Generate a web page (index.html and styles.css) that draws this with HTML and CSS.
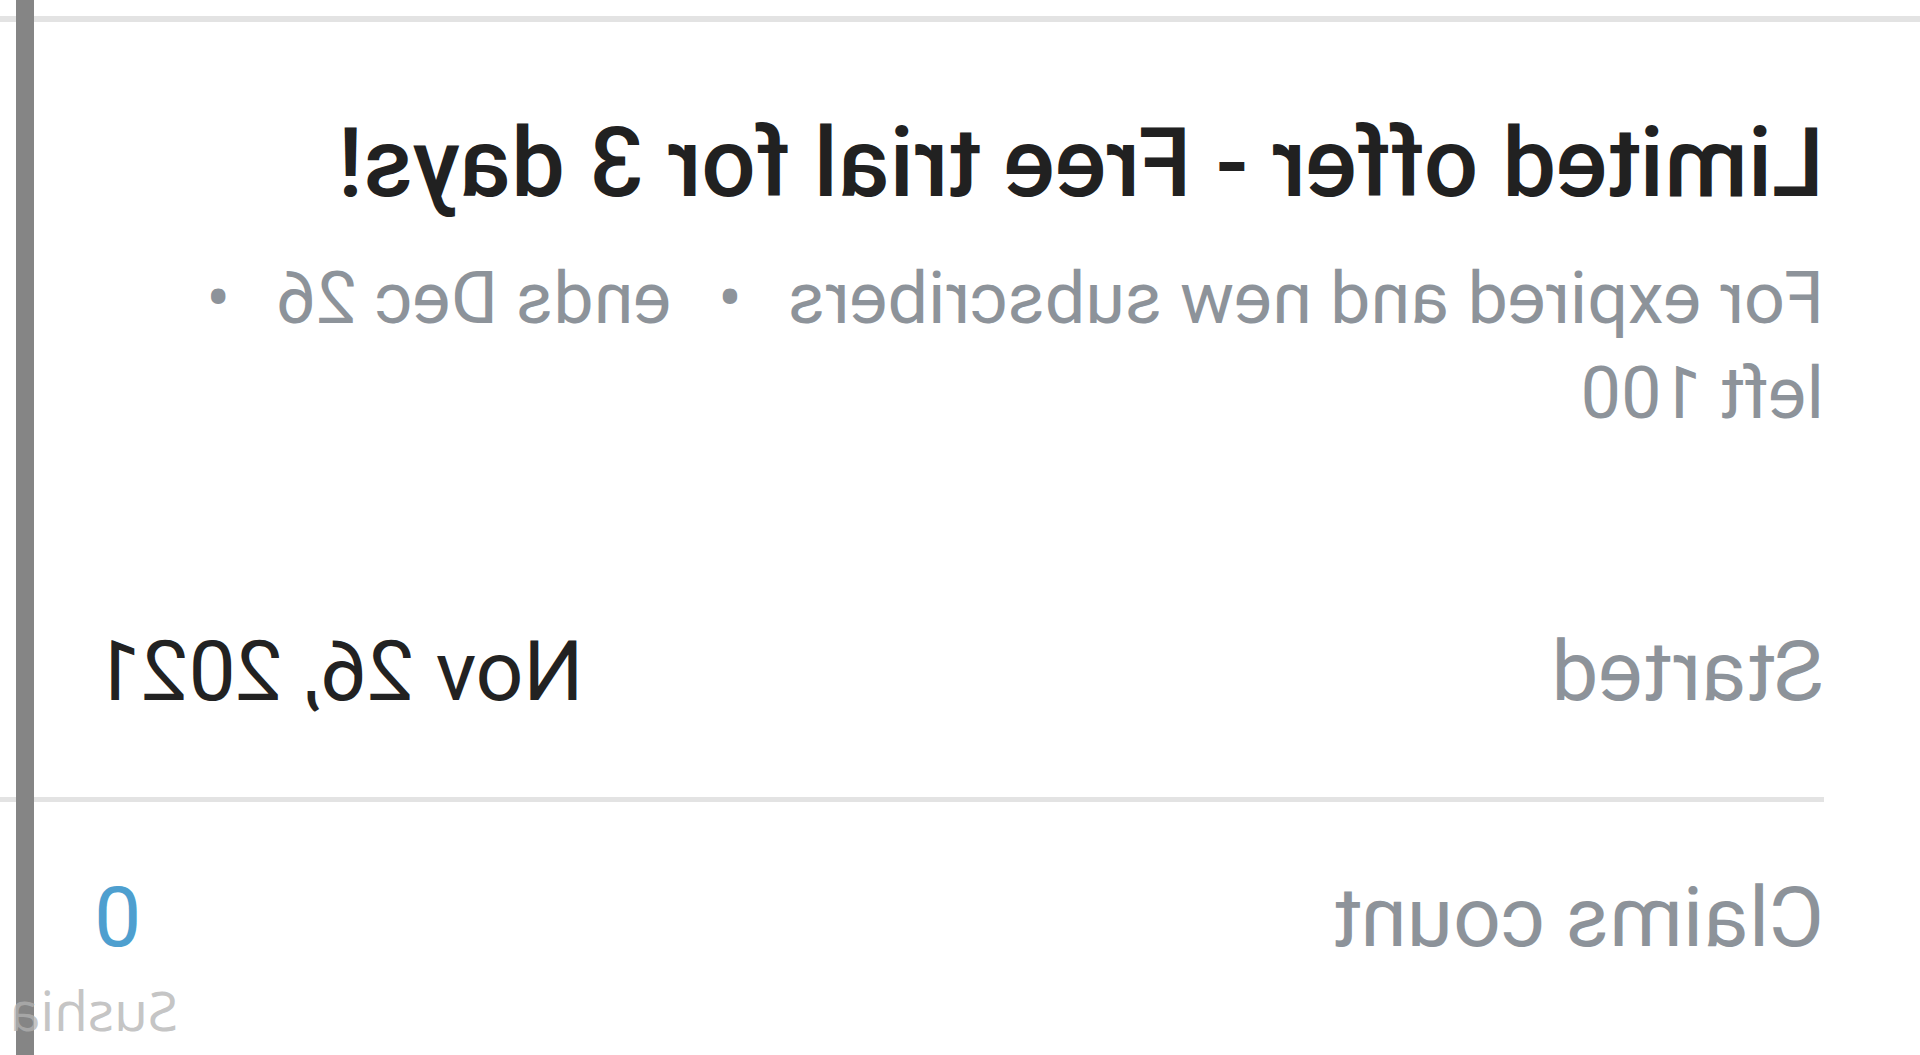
FILE: index.html
```html
<!DOCTYPE html>
<html lang="en">
<head>
<meta charset="utf-8">
<title>Limited offer</title>
<link rel="stylesheet" href="styles.css">
</head>
<body>
<div class="screen">
  <div class="topline"></div>
  <header class="offer">
    <h1 class="offer-title">Limited offer - Free trial for 3 days!</h1>
    <p class="offer-meta">For expired and new subscribers<span class="dot">•</span>ends Dec 26<span class="dot">•</span><br>left 100</p>
  </header>
  <div class="row row-first">
    <span class="row-label">Started</span>
    <span class="row-value">Nov 26, 2021</span>
  </div>
  <div class="divider"></div>
  <div class="row row-second">
    <span class="row-label">Claims count</span>
    <span class="row-value row-value-link">0</span>
  </div>
  <div class="scrollbar"></div>
  <div class="watermark">Sushia</div>
</div>
</body>
</html>
```
FILE: styles.css
```css
html, body {
  margin: 0;
  padding: 0;
  background: #ffffff;
}

.screen {
  position: relative;
  width: 1920px;
  height: 1055px;
  overflow: hidden;
  background: #ffffff;
  transform: scaleX(-1);
  font-family: Roboto, "Liberation Sans", sans-serif;
  padding-top: 16px;
  box-sizing: border-box;
}

.topline {
  height: 6px;
  background: #e3e3e3;
}

.offer {
  padding: 85px 94px 0 96px;
}

.offer-title {
  margin: 0;
  font-size: 96px;
  line-height: 112px;
  font-weight: 500;
  color: #212121;
  white-space: nowrap;
}

.offer-meta {
  margin: 32px 0 0;
  font-size: 72px;
  line-height: 95px;
  font-weight: 400;
  color: #8d939a;
  white-space: nowrap;
}

.dot {
  display: inline-block;
  margin: 0 46px;
}

.row {
  display: flex;
  justify-content: space-between;
  align-items: baseline;
  padding: 0 94px 0 96px;
  font-size: 84px;
  line-height: 100px;
}

.row-first {
  margin-top: 115px;
  padding-top: 66px;
  padding-bottom: 75px;
}

.row-second {
  padding-top: 66px;
}

.row-label {
  color: #8d939a;
}

.row-value {
  color: #222222;
}

.row-value-link {
  color: #4e9fcf;
}

.divider {
  height: 5px;
  margin-left: 96px;
  background: #e3e3e3;
}

.scrollbar {
  position: absolute;
  top: 0;
  bottom: 0;
  right: 16px;
  width: 18px;
  background: #858585;
}

.watermark {
  position: absolute;
  left: 1742px;
  top: 972px;
  font-family: "Open Sans", sans-serif;
  font-size: 55px;
  line-height: 76px;
  color: rgba(178, 178, 178, 0.77);
  white-space: nowrap;
}
```
